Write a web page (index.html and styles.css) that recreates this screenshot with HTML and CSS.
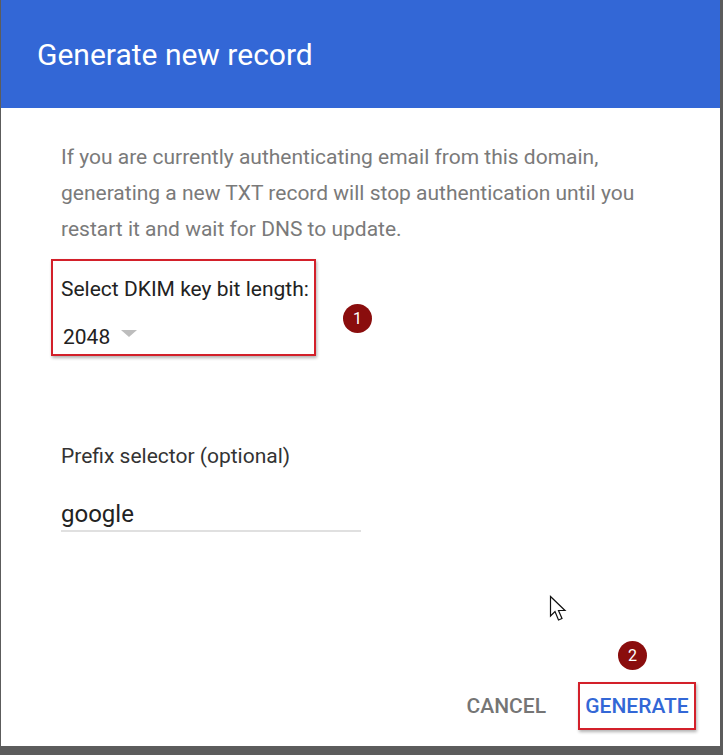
FILE: index.html
```html
<!DOCTYPE html>
<html lang="en">
<head>
    <meta charset="UTF-8">
    <meta name="viewport" content="width=device-width, initial-scale=1.0">
    <title>Generate new record</title>
    <link rel="stylesheet" href="styles.css">
</head>
<body>

    <div class="dialog">
        <div class="dialog-header">
            <h1>Generate new record</h1>
        </div>

        <div class="dialog-body">
            <p class="intro">If you are currently authenticating email from this domain, generating a new TXT record will stop authentication until you restart it and wait for DNS to update.</p>

            <div class="key-box">
                <label class="field-label">Select DKIM key bit length:</label>
                <div class="select">
                    <span>2048</span>
                    <span class="caret"></span>
                </div>
            </div>

            <label class="field-label prefix-label" for="prefix">Prefix selector (optional)</label>
            <input class="prefix-input" type="text" id="prefix" value="google">
        </div>

        <div class="dialog-footer">
            <button class="btn btn-cancel">CANCEL</button>
            <button class="btn btn-generate">GENERATE</button>
        </div>

        <!-- annotation markers -->
        <span class="step step-one">1</span>
        <span class="step step-two">2</span>

        <svg class="pointer" width="20" height="29" viewBox="0 0 20 29">
            <path d="M1.5 1.5 L1.5 21 L6 16.5 L9.5 25 L13 23.5 L9.5 15.5 L16 15.5 Z" fill="#fff" stroke="#111" stroke-width="1.2" stroke-linejoin="miter"/>
        </svg>
    </div>

</body>
</html>
```

FILE: styles.css
```css
/* dialog on dark backdrop */

body {
    margin: 0;
    padding: 0 3px 9px 1px;
    background-color: #5c5c5c;
    font-family: Roboto, "Liberation Sans", Arial, sans-serif;
}

.dialog {
    position: relative;
    width: 719px;
    height: 746px;
    background-color: #fff;
    display: flex;
    flex-direction: column;
}

.dialog-header {
    height: 108px;
    background-color: #3367d6;
    display: flex;
    align-items: center;
    padding-left: 36px;
    box-sizing: border-box;
}

.dialog-header h1 {
    margin: 0;
    font-size: 30px;
    font-weight: 400;
    color: #fff;
}

.dialog-body {
    padding: 31px 0 0 60px;
}

.intro {
    width: 590px;
    margin: 0;
    font-size: 21px;
    line-height: 36px;
    color: #7a7a7a;
}

.key-box {
    width: 265px;
    height: 97px;
    box-sizing: border-box;
    margin: 12px 0 0 -10px;
    padding: 16px 0 0 8px;
    border: 2px solid #d3202a;
    box-shadow: 1px 2px 3px rgba(0, 0, 0, 0.3);
}

.field-label {
    display: block;
    font-size: 21px;
    line-height: 24px;
    color: #222;
}

.select {
    display: flex;
    align-items: center;
    margin-top: 24px;
    padding-left: 2px;
    font-size: 21px;
    line-height: 24px;
    color: #222;
}

.caret {
    width: 0;
    height: 0;
    margin: 0 0 8px 11px;
    border-left: 8px solid transparent;
    border-right: 8px solid transparent;
    border-top: 7px solid #bdbdbd;
}

.prefix-label {
    margin-top: 88px;
    color: #333;
}

.prefix-input {
    display: block;
    width: 300px;
    height: 35px;
    margin-top: 29px;
    padding: 0;
    box-sizing: border-box;
    border: none;
    border-bottom: 2px solid #e0e0e0;
    font-family: inherit;
    font-size: 24px;
    color: #222;
    outline: none;
}

.dialog-footer {
    margin-top: auto;
    display: flex;
    justify-content: flex-end;
    align-items: center;
    gap: 32px;
    padding: 0 24px 16px 0;
}

.btn {
    background: none;
    border: none;
    padding: 0;
    font-family: inherit;
    font-size: 21px;
    font-weight: 500;
    cursor: pointer;
}

.btn-cancel {
    color: #757575;
}

.btn-generate {
    width: 118px;
    height: 48px;
    color: #3367d6;
    border: 2px solid #d3202a;
    box-shadow: 1px 2px 3px rgba(0, 0, 0, 0.3);
}

.step {
    position: absolute;
    width: 29px;
    height: 29px;
    border-radius: 50%;
    background-color: #8a0d0d;
    color: #fff;
    font-size: 16px;
    line-height: 29px;
    text-align: center;
}

.step-one {
    left: 342px;
    top: 304px;
}

.step-two {
    left: 617px;
    top: 641px;
}

.pointer {
    position: absolute;
    left: 548px;
    top: 595px;
}
```
